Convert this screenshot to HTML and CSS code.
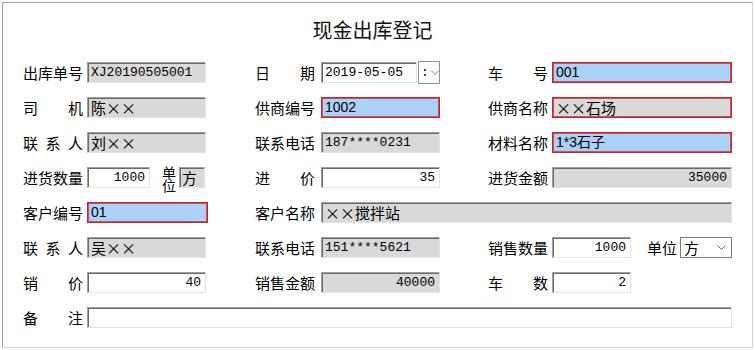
FILE: index.html
```html
<!DOCTYPE html>
<html lang="zh-CN">
<head>
<meta charset="utf-8">
<title>现金出库登记</title>
<link rel="stylesheet" href="styles.css">
</head>
<body>
<div class="frame">
  <h1 class="title">现金出库登记</h1>
  <div class="form">
    <!-- row 1 -->
    <div class="field c1"><span class="lbl">出库单号</span><div class="box ro mono">XJ20190505001</div></div>
    <div class="field c2"><span class="lbl">日期</span><div class="box date mono">2019-05-05</div><div class="dbtn"><span class="colon">:</span><svg width="9" height="6" viewBox="0 0 9 6"><polyline points="0.5,0.5 4.5,4.5 8.5,0.5" fill="none" stroke="#6d6d6d" stroke-width="1"/></svg></div></div>
    <div class="field c3"><span class="lbl">车号</span><div class="box req sans">001</div></div>
    <!-- row 2 -->
    <div class="field c1"><span class="lbl">司机</span><div class="box ro cjk">陈××</div></div>
    <div class="field c2"><span class="lbl">供商编号</span><div class="box req sans">1002</div></div>
    <div class="field c3"><span class="lbl">供商名称</span><div class="box ro redline cjk">××石场</div></div>
    <!-- row 3 -->
    <div class="field c1"><span class="lbl">联系人</span><div class="box ro cjk">刘××</div></div>
    <div class="field c2"><span class="lbl">联系电话</span><div class="box ro mono">187****0231</div></div>
    <div class="field c3"><span class="lbl">材料名称</span><div class="box req sans">1*3石子</div></div>
    <!-- row 4 -->
    <div class="field c1"><span class="lbl">进货数量</span><div class="box num mono qty">1000</div><span class="vlbl">单位</span><div class="box ro cjk unit">方</div></div>
    <div class="field c2"><span class="lbl">进价</span><div class="box num mono">35</div></div>
    <div class="field c3"><span class="lbl">进货金额</span><div class="box ro num mono">35000</div></div>
    <!-- row 5 -->
    <div class="field c1"><span class="lbl">客户编号</span><div class="box req sans">01</div></div>
    <div class="field c23"><span class="lbl">客户名称</span><div class="box ro cjk">××搅拌站</div></div>
    <!-- row 6 -->
    <div class="field c1"><span class="lbl">联系人</span><div class="box ro cjk">吴××</div></div>
    <div class="field c2"><span class="lbl">联系电话</span><div class="box ro mono">151****5621</div></div>
    <div class="field c3"><span class="lbl">销售数量</span><div class="box num mono sqty">1000</div><span class="hlbl">单位</span><div class="select cjk"><span>方</span><svg width="9" height="6" viewBox="0 0 9 6"><polyline points="0.5,0.5 4.5,4.5 8.5,0.5" fill="none" stroke="#6d6d6d" stroke-width="1"/></svg></div></div>
    <!-- row 7 -->
    <div class="field c1"><span class="lbl">销价</span><div class="box num mono">40</div></div>
    <div class="field c2"><span class="lbl">销售金额</span><div class="box ro num mono">40000</div></div>
    <div class="field c3"><span class="lbl">车数</span><div class="box num mono sqty">2</div></div>
    <!-- row 8 -->
    <div class="field call"><span class="lbl">备注</span><div class="box"></div></div>
  </div>
</div>
</body>
</html>
```
FILE: styles.css
```css
html, body {
  margin: 0;
  padding: 0;
  background: #ffffff;
}
body {
  font-family: "Noto Sans CJK SC", "Liberation Sans", sans-serif;
  color: #000;
}
.frame {
  box-sizing: border-box;
  margin: 2px 0 0 2px;
  width: 751px;
  height: 346px;
  border-top: 1px solid #a0a0a0;
  border-left: 1px solid #a0a0a0;
  border-right: 1px solid #d6d6d6;
  border-bottom: 1px solid #d6d6d6;
  padding: 17px 0 0 20px;
}
.title {
  margin: 0 0 22px 0;
  padding-right: 30px;
  font-size: 20px;
  line-height: 20px;
  font-weight: 400;
  text-align: center;
  color: #111;
}
.form {
  display: grid;
  grid-template-columns: 184px 185px 244px;
  column-gap: 48px;
  grid-auto-rows: 21px;
  row-gap: 14px;
}
.field {
  display: flex;
  align-items: center;
  height: 21px;
}
.c23 { grid-column: 2 / 4; }
.call { grid-column: 1 / 4; }
.lbl {
  flex: none;
  width: 60px;
  font-size: 15px;
  line-height: 21px;
  text-align: justify;
  text-align-last: justify;
  white-space: nowrap;
}
.c1 .lbl, .call .lbl { margin-right: 4px; }
.c2 .lbl, .c23 .lbl { margin-right: 6px; }
.c3 .lbl { margin-right: 4px; }
.box {
  box-sizing: border-box;
  flex: 1;
  height: 21px;
  background: #fff;
  border: 1px solid;
  border-color: #a0a0a0 #e3e3e3 #e3e3e3 #a0a0a0;
  box-shadow: inset 1px 1px 0 #6a6a6a;
  padding: 0 3px 0 3px;
  white-space: nowrap;
  overflow: hidden;
  line-height: 19px;
}
.c1 .box { flex: none; width: 119px; }
.ro { background: #d9d9d9; }
.req {
  background: #abd1f9;
  border: 1px solid #cf1f28;
  box-shadow: inset 0 0 0 1px #b85a5f;
}
.redline {
  border: 1px solid #cf1f28;
  box-shadow: inset 0 0 0 1px #b85a5f;
}
.c1 .req { width: 121px; }
.mono {
  font-family: "Liberation Mono", "DejaVu Sans Mono", monospace;
  font-size: 13px;
}
.sans {
  font-family: "Liberation Sans", "Noto Sans CJK SC", sans-serif;
  font-size: 14px;
}
.cjk {
  font-family: "Noto Sans CJK SC", sans-serif;
  font-size: 15px;
  font-feature-settings: "fwid";
}
.num { text-align: right; padding-right: 4px; }
.c1 .box.qty { width: 63px; }
.vlbl {
  flex: none;
  width: 15px;
  margin: 0 2px 0 12px;
  font-size: 14px;
  line-height: 13px;
  white-space: normal;
  word-break: break-all;
  position: relative;
  top: 1px;
}
.c1 .box.unit { width: 26px; padding: 0 2px; }
.date { flex: none; width: 96px; }
.dbtn {
  box-sizing: border-box;
  flex: none;
  width: 22px;
  height: 23px;
  margin-left: 1px;
  border: 1px solid #8f8f8f;
  background: #fff;
  display: flex;
  align-items: center;
  padding-left: 2px;
  gap: 2px;
}
.colon {
  font-family: "Liberation Mono", monospace;
  font-size: 13px;
  line-height: 13px;
}
.sqty { flex: none; width: 79px; }
.hlbl {
  flex: none;
  font-size: 15px;
  margin: 0 3px 0 16px;
  white-space: nowrap;
}
.select {
  box-sizing: border-box;
  flex: 1;
  height: 21px;
  border: 1px solid #7a7a7a;
  background: #fff;
  display: flex;
  align-items: center;
  justify-content: space-between;
  padding: 0 5px 0 3px;
  line-height: 19px;
}
```
